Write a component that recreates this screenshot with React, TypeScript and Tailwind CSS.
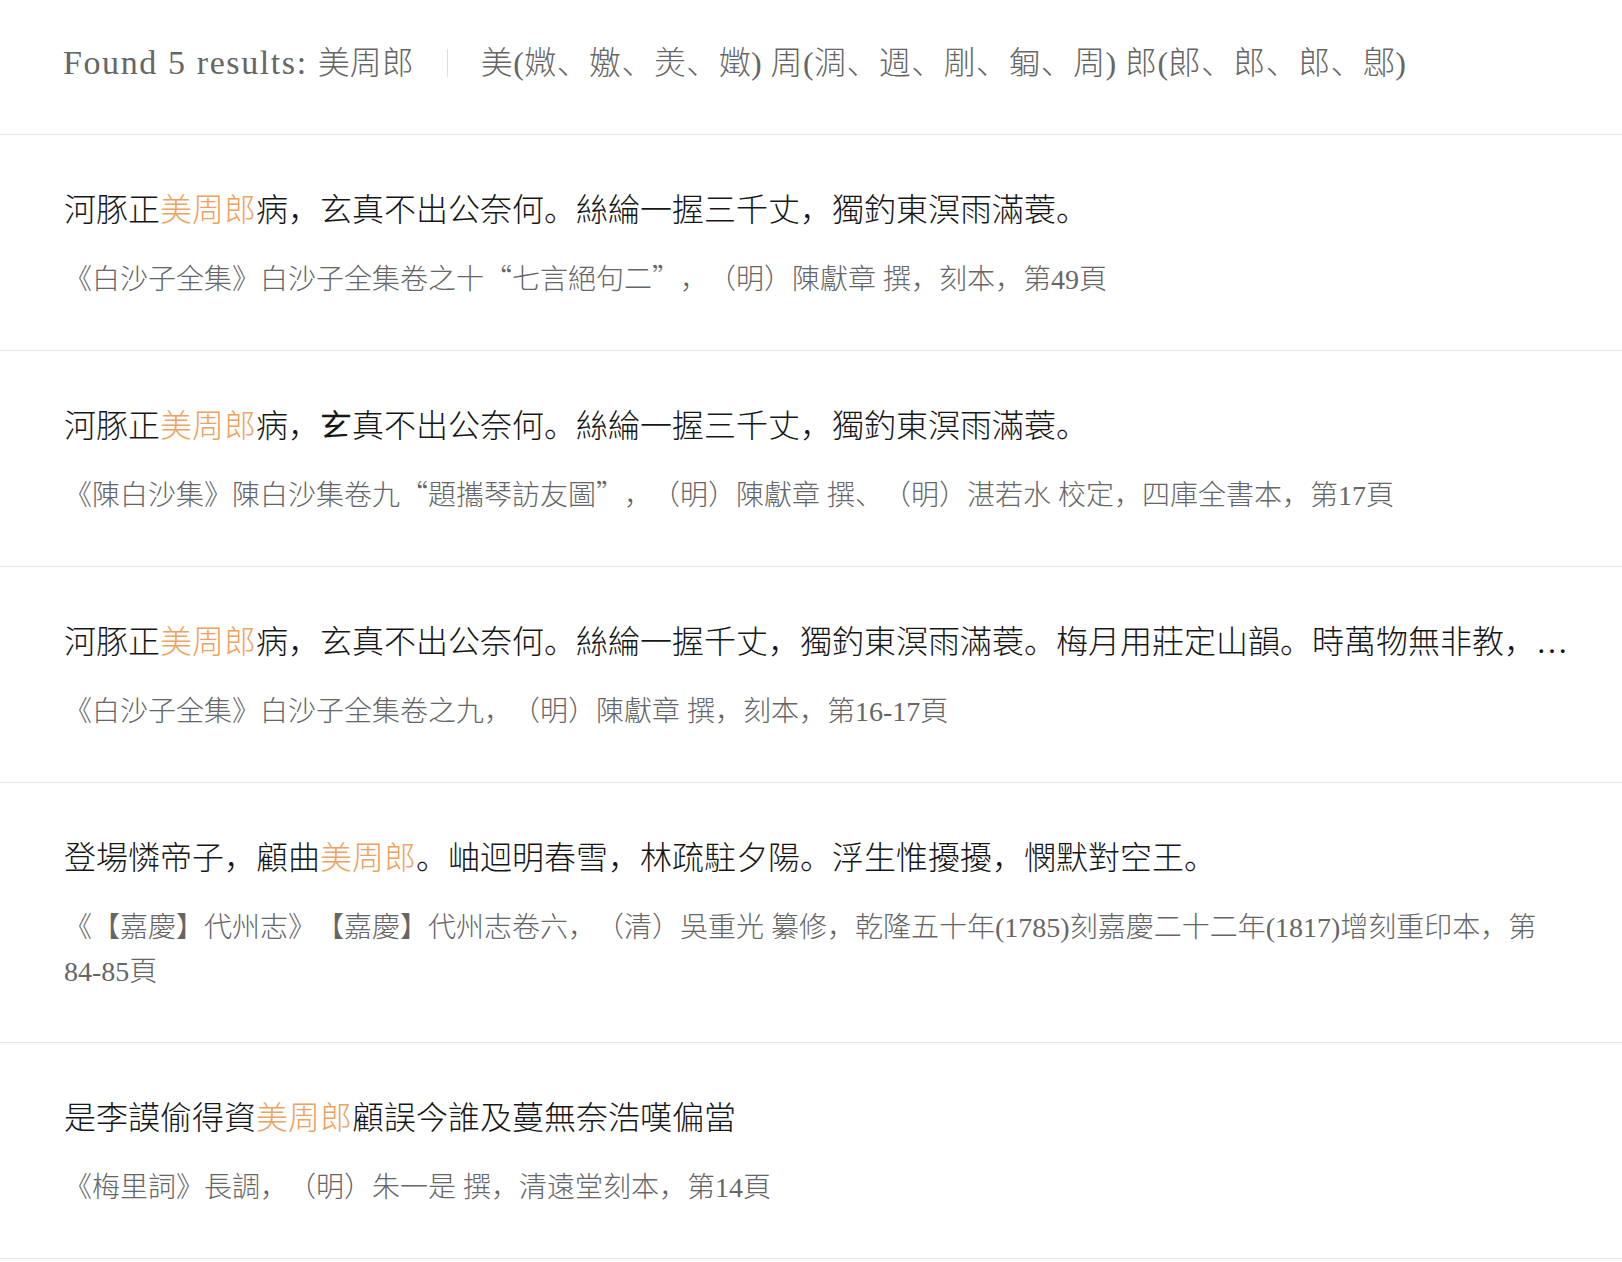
const LATIN = '"Liberation Serif", "Noto Sans CJK SC", serif';
const CJK = '"Noto Sans CJK SC", "Noto Sans CJK TC", sans-serif';

type Row = {
  pre: string;
  post: string;
  source: string;
};

const rows: Row[] = [
  {
    pre: "河豚正",
    post: "病，玄真不出公奈何。絲綸一握三千丈，獨釣東溟雨滿蓑。",
    source: "《白沙子全集》白沙子全集卷之十“七言絕句二”，（明）陳獻章 撰，刻本，第49頁",
  },
  {
    pre: "河豚正",
    post: "病，𤣥真不出公奈何。絲綸一握三千丈，獨釣東溟雨滿蓑。",
    source: "《陳白沙集》陳白沙集卷九“題攜琴訪友圖”，（明）陳獻章 撰、（明）湛若水 校定，四庫全書本，第17頁",
  },
  {
    pre: "河豚正",
    post: "病，玄真不出公奈何。絲綸一握千丈，獨釣東溟雨滿蓑。梅月用莊定山韻。時萬物無非教，…",
    source: "《白沙子全集》白沙子全集卷之九，（明）陳獻章 撰，刻本，第16-17頁",
  },
  {
    pre: "登場憐帝子，顧曲",
    post: "。岫迴明春雪，林疏駐夕陽。浮生惟擾擾，憫默對空王。",
    source:
      "《【嘉慶】代州志》【嘉慶】代州志卷六，（清）吳重光 纂修，乾隆五十年(1785)刻嘉慶二十二年(1817)增刻重印本，第84-85頁",
  },
  {
    pre: "是李謨偷得資",
    post: "顧誤今誰及蔓無奈浩嘆偏當",
    source: "《梅里詞》長調，（明）朱一是 撰，清遠堂刻本，第14頁",
  },
];

// curly quotes must come from the CJK font so they stay full width
function Source({ text }: { text: string }) {
  const parts = text.split(/([“”])/);
  return (
    <>
      {parts.map((p, i) =>
        p === "“" || p === "”" ? (
          <span key={i} className="leading-[0px]" style={{ fontFamily: CJK }}>
            {p}
          </span>
        ) : (
          <span key={i}>{p}</span>
        )
      )}
    </>
  );
}

function ResultRow({ row }: { row: Row }) {
  return (
    <div className="border-b border-[#e8e8e8] pl-[64px] pr-[62px] pt-[50px] pb-[48px]">
      <div className="text-[32px] leading-[50px] text-[#161616] font-light whitespace-nowrap">
        {row.pre}
        <span className="text-[#eea25f]">美周郎</span>
        {row.post}
      </div>
      <div className="mt-[23px] text-[28px] leading-[44px] text-[#666] font-light">
        <Source text={row.source} />
      </div>
    </div>
  );
}

export default function App() {
  return (
    <div
      lang="zh-Hans"
      className="min-h-screen bg-white [text-spacing-trim:space-all]"
      style={{ fontFamily: LATIN }}
    >
      <div className="flex items-center border-b border-[#e8e8e8] pl-[63px] pt-[38px] pb-[46px] text-[32px] leading-[50px] text-[#666] font-light">
        <span>
          <span className="text-[34px] tracking-[1.6px]">Found 5 results: </span>
          <span>美周郎</span>
        </span>
        <span className="mx-[33px] h-[28px] w-px bg-[#dedede]" />
        <span className="tracking-[0.4px]">美(媺、嬓、羙、嬍) 周(淍、週、㓮、匔、周) 郎(郞、郎、郎、鄎)</span>
      </div>
      {rows.map((r, i) => (
        <ResultRow key={i} row={r} />
      ))}
    </div>
  );
}
